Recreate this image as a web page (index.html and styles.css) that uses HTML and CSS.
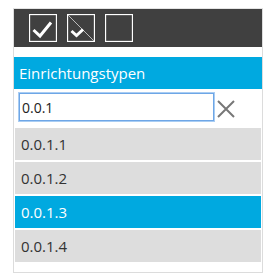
FILE: index.html
```html
<!DOCTYPE html>
<html>
<head>
<meta charset="utf-8">
<link rel="stylesheet" href="styles.css">
</head>
<body>
<div class="panel">
  <div class="toolbar">
    <span class="cb">
      <svg width="28" height="28" viewBox="0 0 28 28"><rect x="0.5" y="0.5" width="27" height="27" fill="none" stroke="#fff" stroke-width="1.3"/><path d="M4.5 16 L11 22 L22 8.5" fill="none" stroke="#fff" stroke-width="3"/></svg>
    </span>
    <span class="cb">
      <svg width="28" height="28" viewBox="0 0 28 28"><rect x="0.5" y="0.5" width="27" height="27" fill="none" stroke="#fff" stroke-width="1.3"/><line x1="1" y1="1" x2="27" y2="27" stroke="#bbb" stroke-width="1"/><path d="M4.5 17 L9.5 21.5 L16 15.5" fill="none" stroke="#fff" stroke-width="3"/></svg>
    </span>
    <span class="cb">
      <svg width="28" height="28" viewBox="0 0 28 28"><rect x="0.5" y="0.5" width="27" height="27" fill="none" stroke="#fff" stroke-width="1.3"/></svg>
    </span>
  </div>
  <div class="spacer"></div>
  <div class="header">Einrichtungstypen</div>
  <div class="search">
    <input class="field" type="text" value="0.0.1">
    <svg class="clear" width="18" height="18" viewBox="0 0 18 18"><path d="M1 1 L17 17 M17 1 L1 17" stroke="#777" stroke-width="2"/></svg>
  </div>
  <ul class="list">
    <li class="row">0.0.1.1</li>
    <li class="row">0.0.1.2</li>
    <li class="row selected">0.0.1.3</li>
    <li class="row">0.0.1.4</li>
  </ul>
</div>
</body>
</html>
```
FILE: styles.css
```css
html, body {
  margin: 0;
  padding: 0;
  background: #fff;
}
body {
  font-family: "Open Sans", "Noto Sans", sans-serif;
}
.panel {
  box-sizing: border-box;
  margin: 8px 0 0 13px;
  width: 250px;
  height: 265px;
  border: 1px solid #dcdcdc;
  border-top-color: #e4e4e4;
}
.toolbar {
  background: #404040;
  height: 38px;
  box-sizing: border-box;
  padding: 5px 15px;
  display: flex;
  gap: 10px;
}
.cb {
  display: block;
  width: 28px;
  height: 28px;
}
.cb svg {
  display: block;
}
.spacer {
  height: 10px;
}
.header {
  background: #00a9e0;
  color: #fff;
  height: 32px;
  line-height: 32px;
  font-size: 15px;
  padding-left: 5px;
}
.search {
  display: flex;
  align-items: center;
  padding: 4px 0 7px 5px;
  gap: 3px;
}
.field {
  box-sizing: border-box;
  width: 195px;
  height: 28px;
  margin: 0;
  border: 1px solid #6ea6e6;
  box-shadow: 0 0 0 1px #a9cdf3;
  outline: none;
  padding: 0 2px;
  font-family: "Open Sans", "Noto Sans", sans-serif;
  font-size: 14px;
  color: #222;
  background: #fff;
}
.clear {
  display: block;
  margin-top: 3px;
}
.list {
  list-style: none;
  margin: 0 1px;
  padding: 0;
  display: flex;
  flex-direction: column;
  gap: 2px;
}
.row {
  background: #dddddd;
  height: 32px;
  line-height: 32px;
  padding-left: 6px;
  font-size: 15px;
  color: #333;
}
.row.selected {
  background: #00a9e0;
  color: #fff;
}
```
